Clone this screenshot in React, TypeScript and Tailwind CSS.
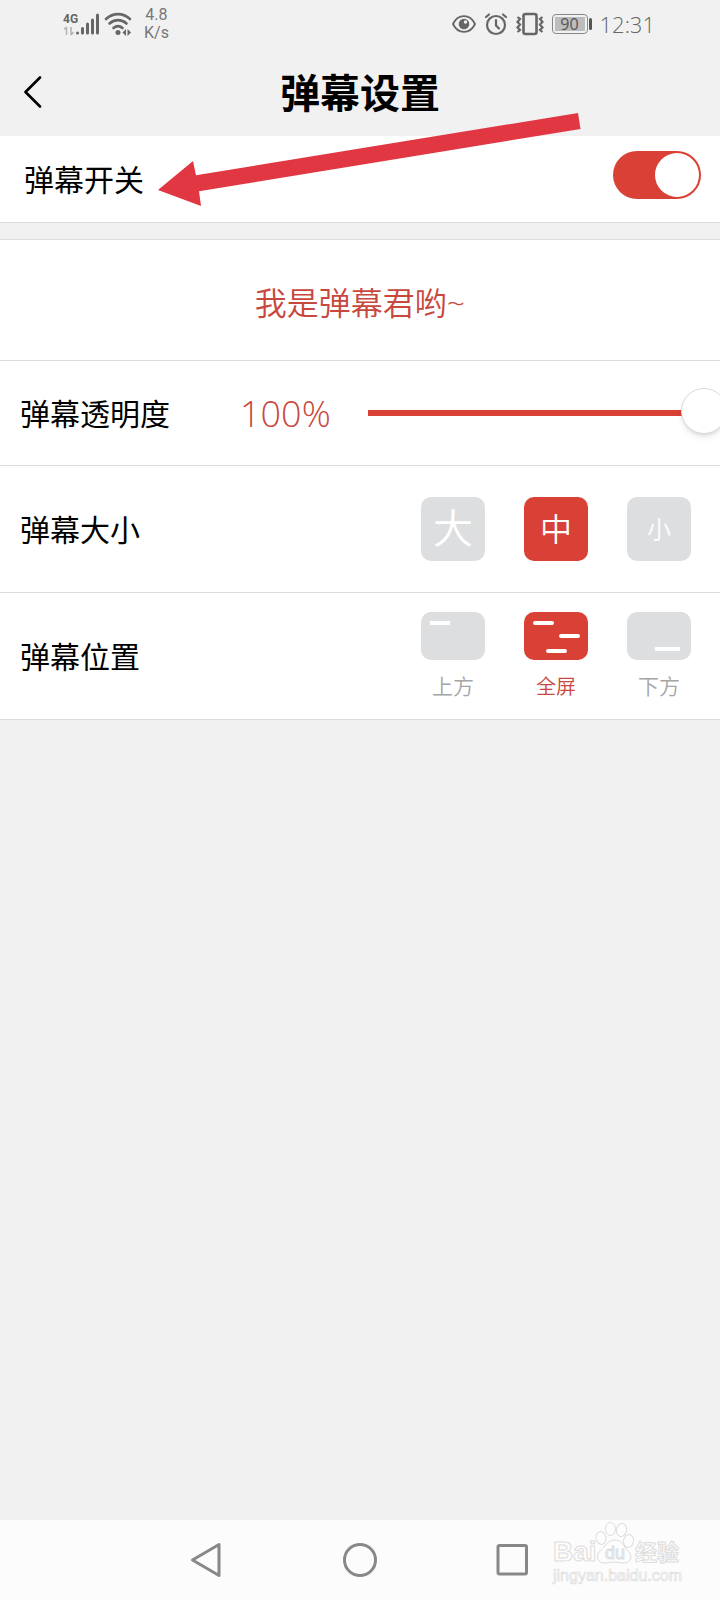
import React, { useState } from 'react';

type Size = 'large' | 'medium' | 'small';
type Position = 'top' | 'full' | 'bottom';

const sizes: { value: Size; label: string; text: string }[] = [
  { value: 'large', label: '大', text: 'text-[40px]' },
  { value: 'medium', label: '中', text: 'text-[32px]' },
  { value: 'small', label: '小', text: 'text-2xl' },
];

const positions: { value: Position; label: string; lines: React.ReactNode }[] = [
  { value: 'top', label: '上方', lines: <path d="M9 11h20" /> },
  {
    value: 'full',
    label: '全屏',
    lines: <path strokeLinecap="round" d="M11 11h17M37 24h17M24 39h17" />,
  },
  { value: 'bottom', label: '下方', lines: <path d="M28 37h25" /> },
];

function StatusBar() {
  return (
    <div className="flex h-12 items-center justify-between pl-[62px] pr-[65px] text-[#666]">
      <div className="flex items-center gap-1">
        <svg className="h-7 w-[38px]" viewBox="0 0 38 28" fill="currentColor" aria-hidden="true">
          <text x="1" y="13" fontSize="12" fontWeight="700" fontFamily="Roboto, sans-serif">4G</text>
          <path d="M4.5 17v8M2 19.5 4.500 17M9 17v8M9 25l2.500-3" fill="none" stroke="#b5b5b5" strokeWidth="1.6" />
          <path
            d="M15.500 23v.1M20.500 18.500v4.500M25.500 14v9M30.500 10v13M35.500 5v18"
            stroke="currentColor"
            strokeWidth="3"
            strokeLinecap="round"
          />
        </svg>
        <svg className="h-7 w-7" viewBox="0 0 28 28" fill="none" stroke="currentColor" strokeWidth="2.6" strokeLinecap="round" aria-hidden="true">
          <path d="M2 9C9 2.500 19 2.500 26 9M5.500 13.500c5-4.500 12-4.500 17 0M9.500 18c3-2.500 6-2.500 9 0" />
          <circle cx="14" cy="22.500" r="2.500" fill="currentColor" stroke="none" />
          <path d="M22 19v7l-3.500-3.500zM23.500 19v7l3.500-3.500z" fill="currentColor" stroke="none" />
        </svg>
        <div className="ml-2 text-center text-base leading-[18px] text-[#777]">
          <div>4.8</div>
          <div>K/s</div>
        </div>
      </div>
      <div className="flex items-center gap-2">
        <svg className="h-6 w-6" viewBox="0 0 24 24" fill="none" stroke="currentColor" strokeWidth="1.8" aria-hidden="true">
          <path d="M1 12C6 1.500 18 1.500 23 12 18 22.500 6 22.500 1 12z" />
          <circle cx="12" cy="12" r="5.3" fill="currentColor" stroke="none" />
          <circle cx="13.5" cy="10" r="1.7" fill="#f1f1f1" stroke="none" />
        </svg>
        <svg className="h-6 w-6" viewBox="0 0 24 24" fill="none" stroke="currentColor" strokeWidth="2.2" strokeLinecap="round" aria-hidden="true">
          <circle cx="12" cy="13" r="9" />
          <path d="M12 8v5.500l3 3M2 5 5 2.500M22 5 19 2.500" />
        </svg>
        <svg className="h-6 w-7" viewBox="0 0 28 24" fill="none" stroke="currentColor" strokeWidth="2.6" aria-hidden="true">
          <rect x="7.5" y="2" width="13" height="20" rx="2" />
          <path d="m1.500 5 2.500 2-2.500 3 2.500 2.500-2.500 3L4 18l-2.500 2M26.500 5 24 7l2.500 3-2.500 2.500 2.500 3L24 18l2.500 2" strokeWidth="2.2" />
        </svg>
        <div className="flex items-center gap-px">
          <div className="flex h-5 w-9 rounded-sm border border-[#888] p-0.5">
            <span className="flex flex-1 items-center justify-center bg-[#bdbdbd] font-[Open_Sans] text-base leading-4 text-[#555]">90</span>
          </div>
          <div className="h-3 w-[3px] rounded-sm bg-[#555]" />
        </div>
        <span className="font-[Open_Sans] text-[22px] font-light text-[#666]">12:31</span>
      </div>
    </div>
  );
}

function Watermark() {
  return (
    <svg
      className="pointer-events-none absolute right-8 top-0 h-20 w-36"
      viewBox="0 0 144 80"
      fill="#fdfdfd"
      stroke="#dcdcdc"
      strokeWidth="1"
      aria-hidden="true"
    >
      <text x="9" y="41" fontSize="28" fontWeight="700" fontFamily="Liberation Sans, sans-serif">Bai</text>
      <ellipse cx="57" cy="18" rx="5" ry="6.5" transform="rotate(-12 57 18)" />
      <ellipse cx="66.500" cy="9" rx="5" ry="6.5" />
      <ellipse cx="77.500" cy="10" rx="5" ry="6.5" transform="rotate(10 77.500 10)" />
      <ellipse cx="84.500" cy="21" rx="5" ry="6.5" transform="rotate(12 84.500 21)" />
      <path d="M71 20c7 0 9 7 13 11 5 5 3 12-4 12-4 0-6-1-10-1s-6 1-9 1c-8 0-10-7-5-12 5-4 8-11 15-11z" />
      <text x="61" y="39" fontSize="18" fontFamily="Liberation Sans, sans-serif">du</text>
      <text x="91" y="40" fontSize="22" fontWeight="700" fontFamily="Noto Sans CJK SC, sans-serif">经验</text>
      <text x="9" y="61" fontSize="16" strokeWidth="0.7" fontFamily="Liberation Sans, sans-serif">jingyan.baidu.com</text>
    </svg>
  );
}

export default function App() {
  const [enabled, setEnabled] = useState(true);
  const [opacity, setOpacity] = useState(100);
  const [size, setSize] = useState<Size>('medium');
  const [position, setPosition] = useState<Position>('full');

  return (
    <div className="flex min-h-screen flex-col overflow-hidden bg-[#f1f1f1] font-['Roboto','Noto_Sans_CJK_SC',sans-serif] text-black">
      <StatusBar />

      <header className="grid h-[88px] grid-cols-[64px_1fr_64px] items-center">
        <button type="button" aria-label="返回" className="flex h-16 items-center pl-6">
          <svg className="h-8 w-[18px]" viewBox="0 0 18 32" fill="none" stroke="currentColor" strokeWidth="2.6" strokeLinecap="round" strokeLinejoin="round">
            <path d="M16 1.500 1.500 16 16 30.500" />
          </svg>
        </button>
        <h1 className="pt-1.5 text-center text-[40px] font-bold leading-[56px]">弹幕设置</h1>
      </header>

      <section className="relative flex h-[87px] items-center justify-between border-b border-[#dcdcdc] bg-white pl-6 pr-[19px]">
        <label htmlFor="danmaku" className="pt-0.5 text-[30px]">弹幕开关</label>
        <input
          id="danmaku"
          type="checkbox"
          role="switch"
          checked={enabled}
          onChange={(e) => setEnabled(e.target.checked)}
          className="mb-2 h-12 w-[88px] cursor-pointer appearance-none rounded-full bg-[#dddee0] p-0.5 before:block before:size-11 before:rounded-full before:bg-white checked:bg-[#d94036] checked:before:ml-10"
        />
        <svg className="pointer-events-none absolute -top-6 left-[156px] h-24 w-[426px]" viewBox="156 112 426 96" fill="#e13742" aria-hidden="true">
          <path d="M158 190 193 161 196 175.300 578 113 580.500 129 199 191.300 201 206z" />
        </svg>
      </section>

      <main className="mt-4 border-t border-[#dcdcdc] bg-white">
        <div className="flex h-[121px] items-center justify-center border-b border-[#dcdcdc] pt-1.5">
          <p
            className="font-['Open_Sans','Noto_Sans_CJK_SC',sans-serif] text-[32px] font-[350] text-[#c8483d]"
            style={{ opacity: opacity / 100 }}
          >
            我是弹幕君哟~
          </p>
        </div>

        <div className="flex h-[105px] items-center border-b border-[#dcdcdc] pl-5">
          <label htmlFor="opacity" className="w-[220px] pt-0.5 text-[30px]">弹幕透明度</label>
          <output htmlFor="opacity" className="w-32 pt-0.5 font-[Open_Sans] text-4xl font-light text-[#c8483d]">{opacity}%</output>
          <input
            id="opacity"
            type="range"
            min={0}
            max={100}
            value={opacity}
            onChange={(e) => setOpacity(Number(e.target.value))}
            style={{ backgroundImage: `linear-gradient(to right, #d94036 ${opacity}%, #dddee0 ${opacity}%)` }}
            className="-mr-[7px] h-1.5 min-w-0 flex-1 cursor-pointer appearance-none [&::-webkit-slider-thumb]:size-[46px] [&::-webkit-slider-thumb]:-translate-y-0.5 [&::-webkit-slider-thumb]:appearance-none [&::-webkit-slider-thumb]:rounded-full [&::-webkit-slider-thumb]:border [&::-webkit-slider-thumb]:border-[#d8d8d8] [&::-webkit-slider-thumb]:bg-white [&::-webkit-slider-thumb]:shadow-md"
          />
        </div>

        <div className="flex h-[127px] items-center justify-between border-b border-[#dcdcdc] pl-5 pr-[29px]">
          <h2 className="pt-0.5 text-[30px]">弹幕大小</h2>
          <div className="flex gap-[39px]">
            {sizes.map((item) => (
              <button
                key={item.value}
                type="button"
                aria-pressed={size === item.value}
                onClick={() => setSize(item.value)}
                className={`flex size-16 items-center justify-center rounded-[10px] pt-0.5 font-[350] leading-none text-white ${item.text} ${
                  size === item.value ? 'bg-[#d94036]' : 'bg-[#dddee0]'
                }`}
              >
                {item.label}
              </button>
            ))}
          </div>
        </div>

        <div className="flex h-[127px] items-center justify-between border-b border-[#dcdcdc] pl-5 pr-[29px]">
          <h2 className="pt-0.5 text-[30px]">弹幕位置</h2>
          <div className="flex gap-[39px]">
            {positions.map((item) => {
              const active = position === item.value;
              return (
                <button
                  key={item.value}
                  type="button"
                  aria-pressed={active}
                  onClick={() => setPosition(item.value)}
                  className={`flex w-16 flex-col items-center gap-3 pt-0.5 ${active ? 'text-[#c8483d]' : 'text-[#a5a5a5]'}`}
                >
                  <svg
                    className={`h-12 w-16 rounded-[10px] ${active ? 'bg-[#d94036]' : 'bg-[#dddee0]'}`}
                    viewBox="0 0 64 48"
                    stroke="#fff"
                    strokeWidth="4"
                    aria-hidden="true"
                  >
                    {item.lines}
                  </svg>
                  <span className={`font-[350] leading-[30px] ${active ? 'text-xl' : 'text-[21px]'}`}>{item.label}</span>
                </button>
              );
            })}
          </div>
        </div>
      </main>

      <nav className="relative mt-auto flex h-20 items-center justify-center bg-[#fcfcfc] text-[#888]">
        <button type="button" aria-label="后退" className="flex h-20 w-[153px] items-center justify-center">
          <svg className="size-9" viewBox="0 0 36 36" fill="none" stroke="currentColor" strokeWidth="3" strokeLinejoin="round">
            <path d="M30 2.500v31L3.500 18z" />
          </svg>
        </button>
        <button type="button" aria-label="主屏幕" className="flex h-20 w-[153px] items-center justify-center">
          <svg className="size-9" viewBox="0 0 36 36" fill="none" stroke="currentColor" strokeWidth="3">
            <circle cx="18" cy="18" r="15.5" />
          </svg>
        </button>
        <button type="button" aria-label="最近任务" className="flex h-20 w-[153px] items-center justify-center">
          <svg className="size-9" viewBox="0 0 36 36" fill="none" stroke="currentColor" strokeWidth="3">
            <rect x="3" y="3.5" width="28.5" height="28.5" rx="1.5" />
          </svg>
        </button>
        <Watermark />
      </nav>
    </div>
  );
}
